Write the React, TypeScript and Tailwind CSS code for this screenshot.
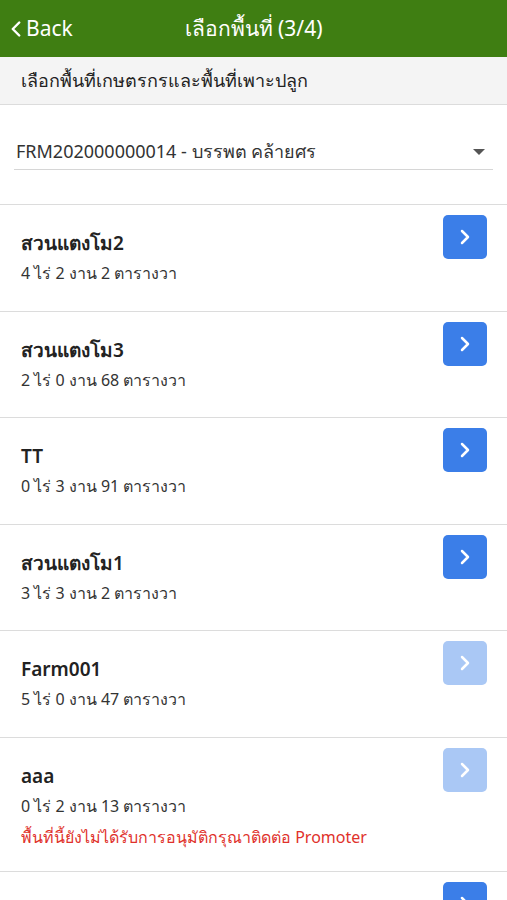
import { ChevronLeft, ChevronRight } from 'lucide-react'

export default function App() {
  const plots = [
    { name: 'สวนแตงโม2', size: '4 ไร่ 2 งาน 2 ตารางวา', active: true },
    { name: 'สวนแตงโม3', size: '2 ไร่ 0 งาน 68 ตารางวา', active: true },
    { name: 'TT', size: '0 ไร่ 3 งาน 91 ตารางวา', active: true },
    { name: 'สวนแตงโม1', size: '3 ไร่ 3 งาน 2 ตารางวา', active: true },
    { name: 'Farm001', size: '5 ไร่ 0 งาน 47 ตารางวา', active: false },
    {
      name: 'aaa',
      size: '0 ไร่ 2 งาน 13 ตารางวา',
      active: false,
      note: 'พื้นที่นี้ยังไม่ได้รับการอนุมัติกรุณาติดต่อ Promoter'
    },
    // last row is scrolled past the bottom edge, only its button shows
    { name: '', size: '', active: true }
  ]

  return (
    <div className="w-[507px] h-[900px] overflow-hidden bg-white font-['Noto_Sans',sans-serif] text-[#222]">
      {/* Header */}
      <div className="relative h-[57px] bg-[#3f7e12] flex items-center justify-center text-white">
        <div className="absolute left-[3px] top-0 h-full flex items-center">
          <ChevronLeft size={26} strokeWidth={2.25} />
          <span className="text-[21px] -ml-[3px]">Back</span>
        </div>
        <span className="text-[21px]">เลือกพื้นที่ (3/4)</span>
      </div>

      {/* Section title */}
      <div className="h-[48px] bg-[#f4f4f4] border-b border-[#dcdcdc] flex items-center px-[21px]">
        <span className="text-[18px] text-[#222]">เลือกพื้นที่เกษตรกรและพื้นที่เพาะปลูก</span>
      </div>

      {/* Farmer select */}
      <div className="h-[100px] border-b border-[#dcdcdc] px-[14px] pt-[29px]">
        <div className="h-[36px] flex items-center justify-between border-b border-[#d6d6d6] pl-[2px] pr-[8px]">
          <span className="text-[18px] text-[#333]">FRM202000000014 - บรรพต คล้ายศร</span>
          <span className="w-0 h-0 border-l-[6px] border-r-[6px] border-t-[6px] border-l-transparent border-r-transparent border-t-[#555]" />
        </div>
      </div>

      {/* Plots */}
      {plots.map((plot, idx) => (
        <div key={idx} className="flex justify-between items-start border-b border-[#dcdcdc] pl-[21px] pr-[20px]">
          <div className="pt-[25px] pb-[20.5px] min-h-[105.5px]">
            {plot.name && (
              <>
                <div className="text-[19px] font-semibold leading-[26px] text-[#222]">{plot.name}</div>
                <div className="text-[16px] leading-[34px] text-[#333]">{plot.size}</div>
              </>
            )}
            {plot.note && (
              <div className="text-[16px] leading-[28px] text-[#e0312b]">{plot.note}</div>
            )}
          </div>
          <div
            className={
              plot.active
                ? 'mt-[10px] w-[44px] h-[44px] rounded-[5px] bg-[#3b7ee8] flex items-center justify-center text-white'
                : 'mt-[10px] w-[44px] h-[44px] rounded-[5px] bg-[#aac8f5] flex items-center justify-center text-white'
            }
          >
            <ChevronRight size={24} strokeWidth={2.5} />
          </div>
        </div>
      ))}
    </div>
  )
}
